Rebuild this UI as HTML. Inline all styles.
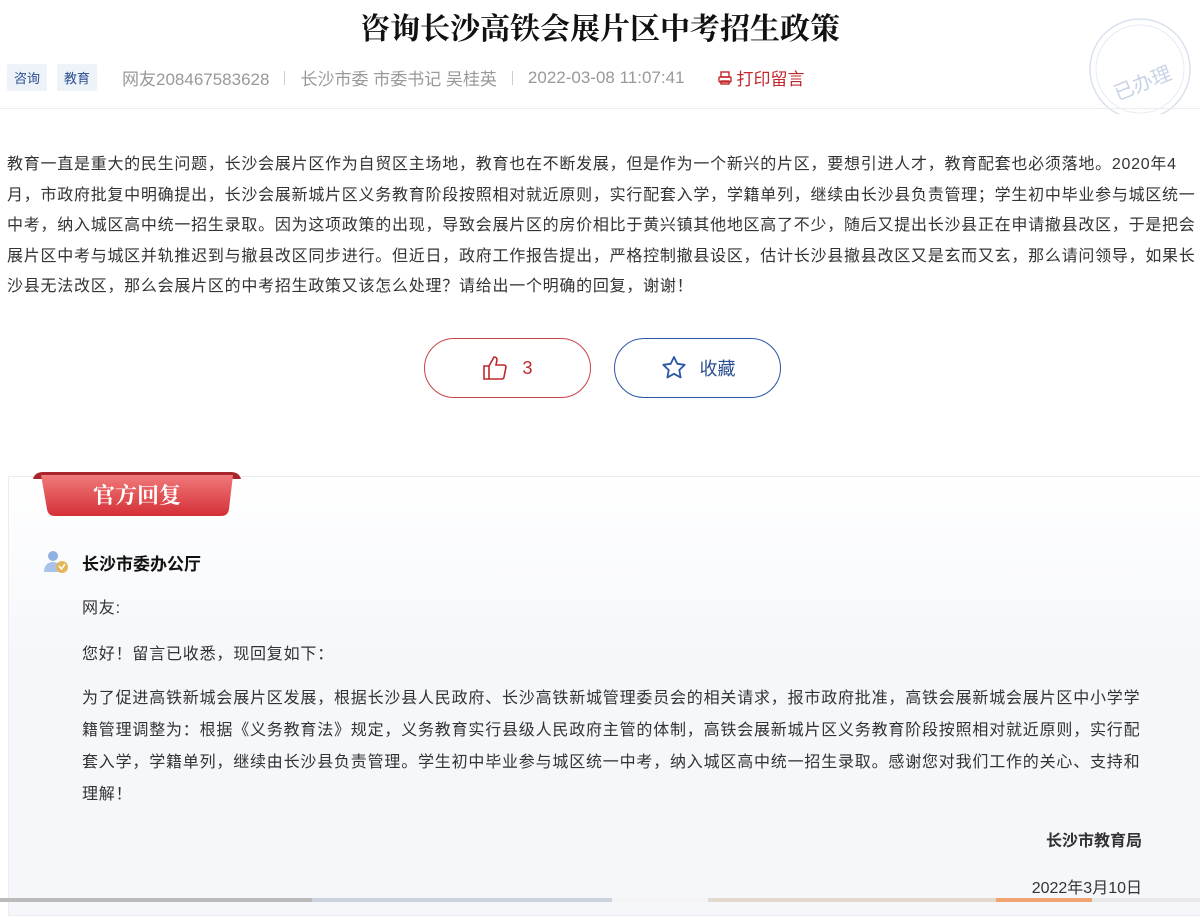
<!DOCTYPE html>
<html><head><meta charset="utf-8"><style>
*{margin:0;padding:0;box-sizing:border-box}
body{width:1200px;height:902px;overflow:hidden;background:#fff;font-family:"Liberation Sans","Noto Sans CJK SC",sans-serif;color:#333;position:relative}
h1{position:absolute;top:4px;left:0;width:1200px;text-align:center;font-family:"Liberation Serif","Noto Serif CJK SC",serif;font-size:30px;font-weight:bold;color:#111}
.meta{position:absolute;top:64px;left:7px;font-size:17px;color:#999;display:flex;align-items:center;white-space:nowrap}
.tag{background:#eef2f9;color:#2a4f91;font-size:13px;padding:4px 4px;margin-right:8px;border-radius:2px;width:40px;text-align:center}
.sep{display:inline-block;width:1px;height:14px;background:#ccc;margin:0 15px}
.line{position:absolute;top:108px;left:0;width:1200px;height:1px;background:#eee}
.body{position:absolute;top:150px;left:7px;width:1192px;font-size:16px;line-height:30.5px;color:#333;letter-spacing:0.74px}
.btn{position:absolute;top:338px;height:60px;border-radius:30px;display:flex;align-items:center;justify-content:center;font-size:18px}
.reply{position:absolute;top:476px;left:8px;width:1200px;height:440px;border:1px solid #ececec;background:linear-gradient(#fff,#f5f7fb 40%)}
.rib{position:absolute;top:469px;left:33px;width:208px;height:48px}
.p{position:absolute;left:82px;width:1100px;font-size:16px;line-height:32px;color:#333;letter-spacing:0.8px;white-space:nowrap}
</style></head><body>
<h1>咨询长沙高铁会展片区中考招生政策</h1>
<div class="meta"><span class="tag">咨询</span><span class="tag" style="margin-left:2px">教育</span><span style="margin-left:17px">网友208467583628</span><span class="sep"></span>长沙市委 市委书记 吴桂英<span class="sep"></span>2022-03-08 11:07:41
<span style="color:#c0282d;margin-left:32px;display:flex;align-items:center"><svg width="16" height="16" viewBox="0 0 16 16" fill="none" stroke="#c0282d" stroke-width="1.4"><rect x="4" y="2" width="8" height="5"/><rect x="2" y="7" width="12" height="5" rx="1"/><rect x="4" y="11" width="8" height="3"/></svg><span style="margin-left:4px">打印留言</span></span></div>
<svg style="position:absolute;left:1085px;top:14px" width="115" height="100" viewBox="0 0 115 100"><circle cx="55" cy="55" r="50" fill="none" stroke="#d9e1ef" stroke-width="1.5"/><circle cx="55" cy="55" r="44" fill="none" stroke="#e6ebf4" stroke-width="1"/><text x="58" y="76" transform="rotate(-22 58 70)" text-anchor="middle" font-size="20" fill="#c9d3e6" font-family="Noto Sans CJK SC">已办理</text></svg>
<div class="line"></div>
<div class="body">教育一直是重大的民生问题，长沙会展片区作为自贸区主场地，教育也在不断发展，但是作为一个新兴的片区，要想引进人才，教育配套也必须落地。2020年4月，市政府批复中明确提出，长沙会展新城片区义务教育阶段按照相对就近原则，实行配套入学，学籍单列，继续由长沙县负责管理；学生初中毕业参与城区统一中考，纳入城区高中统一招生录取。因为这项政策的出现，导致会展片区的房价相比于黄兴镇其他地区高了不少，随后又提出长沙县正在申请撤县改区，于是把会展片区中考与城区并轨推迟到与撤县改区同步进行。但近日，政府工作报告提出，严格控制撤县设区，估计长沙县撤县改区又是玄而又玄，那么请问领导，如果长沙县无法改区，那么会展片区的中考招生政策又该怎么处理？请给出一个明确的回复，谢谢！</div>
<div class="btn" style="left:424px;width:167px;border:1px solid #c9434a;color:#c0282d"><svg width="26" height="26" viewBox="0 0 26 26" fill="none" stroke="#c0282d" stroke-width="1.6"><path d="M2 11h5v13H2zM7 11l5-9c2 0 3 1 3 3l-1 5h8c1 0 2 1 2 2l-2 10c0 1-1 2-2 2H7"/></svg><span style="margin-left:14px">3</span></div>
<div class="btn" style="left:614px;width:167px;border:1px solid #2a57a8;color:#2a4f91"><svg width="28" height="28" viewBox="0 0 28 28" fill="none" stroke="#2a57a8" stroke-width="1.8" stroke-linejoin="round"><path d="M14 3l3.3 6.8 7.4 1-5.4 5.2 1.3 7.4L14 19.8l-6.6 3.6 1.3-7.4L3.3 10.8l7.4-1z"/></svg><span style="margin-left:12px">收藏</span></div>
<div class="reply"></div>
<svg class="rib" viewBox="0 0 208 48"><defs><linearGradient id="g" x1="0" y1="0" x2="0" y2="1"><stop offset="0" stop-color="#f07a7a"/><stop offset="1" stop-color="#d42f36"/></linearGradient></defs><path d="M0 10 Q2 3 10 3 L198 3 Q206 3 208 10Z" fill="#a8262b"/><path d="M8 6 L200 6 L196 40 Q195 47 188 47 L22 47 Q15 47 14 40Z" fill="url(#g)"/><text x="104" y="34" text-anchor="middle" font-size="22" font-weight="bold" fill="#fff" font-family="Noto Serif CJK SC">官方回复</text></svg>
<svg style="position:absolute;left:43px;top:548px" width="28" height="28" viewBox="0 0 28 28"><circle cx="10" cy="8" r="5" fill="#8fb0e0"/><path d="M1 24c0-7 4-10 9-10s9 3 9 10z" fill="#a9c2ea"/><circle cx="19" cy="19" r="6" fill="#e2b659"/><path d="M16 18l2.5 3 3.5-5" stroke="#fff" stroke-width="1.5" fill="none"/></svg>
<div style="position:absolute;left:82px;top:550px;font-size:17px;font-weight:bold;color:#111">长沙市委办公厅</div>
<div class="p" style="top:593px">网友:</div>
<div class="p" style="top:639px">您好！留言已收悉，现回复如下：</div>
<div class="p" style="top:683px">为了促进高铁新城会展片区发展，根据长沙县人民政府、长沙高铁新城管理委员会的相关请求，报市政府批准，高铁会展新城会展片区中小学学<br>籍管理调整为：根据《义务教育法》规定，义务教育实行县级人民政府主管的体制，高铁会展新城片区义务教育阶段按照相对就近原则，实行配<br>套入学，学籍单列，继续由长沙县负责管理。学生初中毕业参与城区统一中考，纳入城区高中统一招生录取。感谢您对我们工作的关心、支持和<br>理解！</div>
<div style="position:absolute;right:58px;top:827px;font-size:16px;font-weight:bold;color:#333">长沙市教育局</div>
<div style="position:absolute;right:58px;top:874px;font-size:16px;color:#333">2022年3月10日</div>
<div style="position:absolute;left:0;top:898px;width:1200px;height:4px;background:linear-gradient(90deg,#bbb 0 26%,#cdd3de 26% 51%,#f4f4f4 51% 59%,#e3dacd 59% 83%,#f0a470 83% 91%,#e8e8e8 91%)"></div>
</body></html>
